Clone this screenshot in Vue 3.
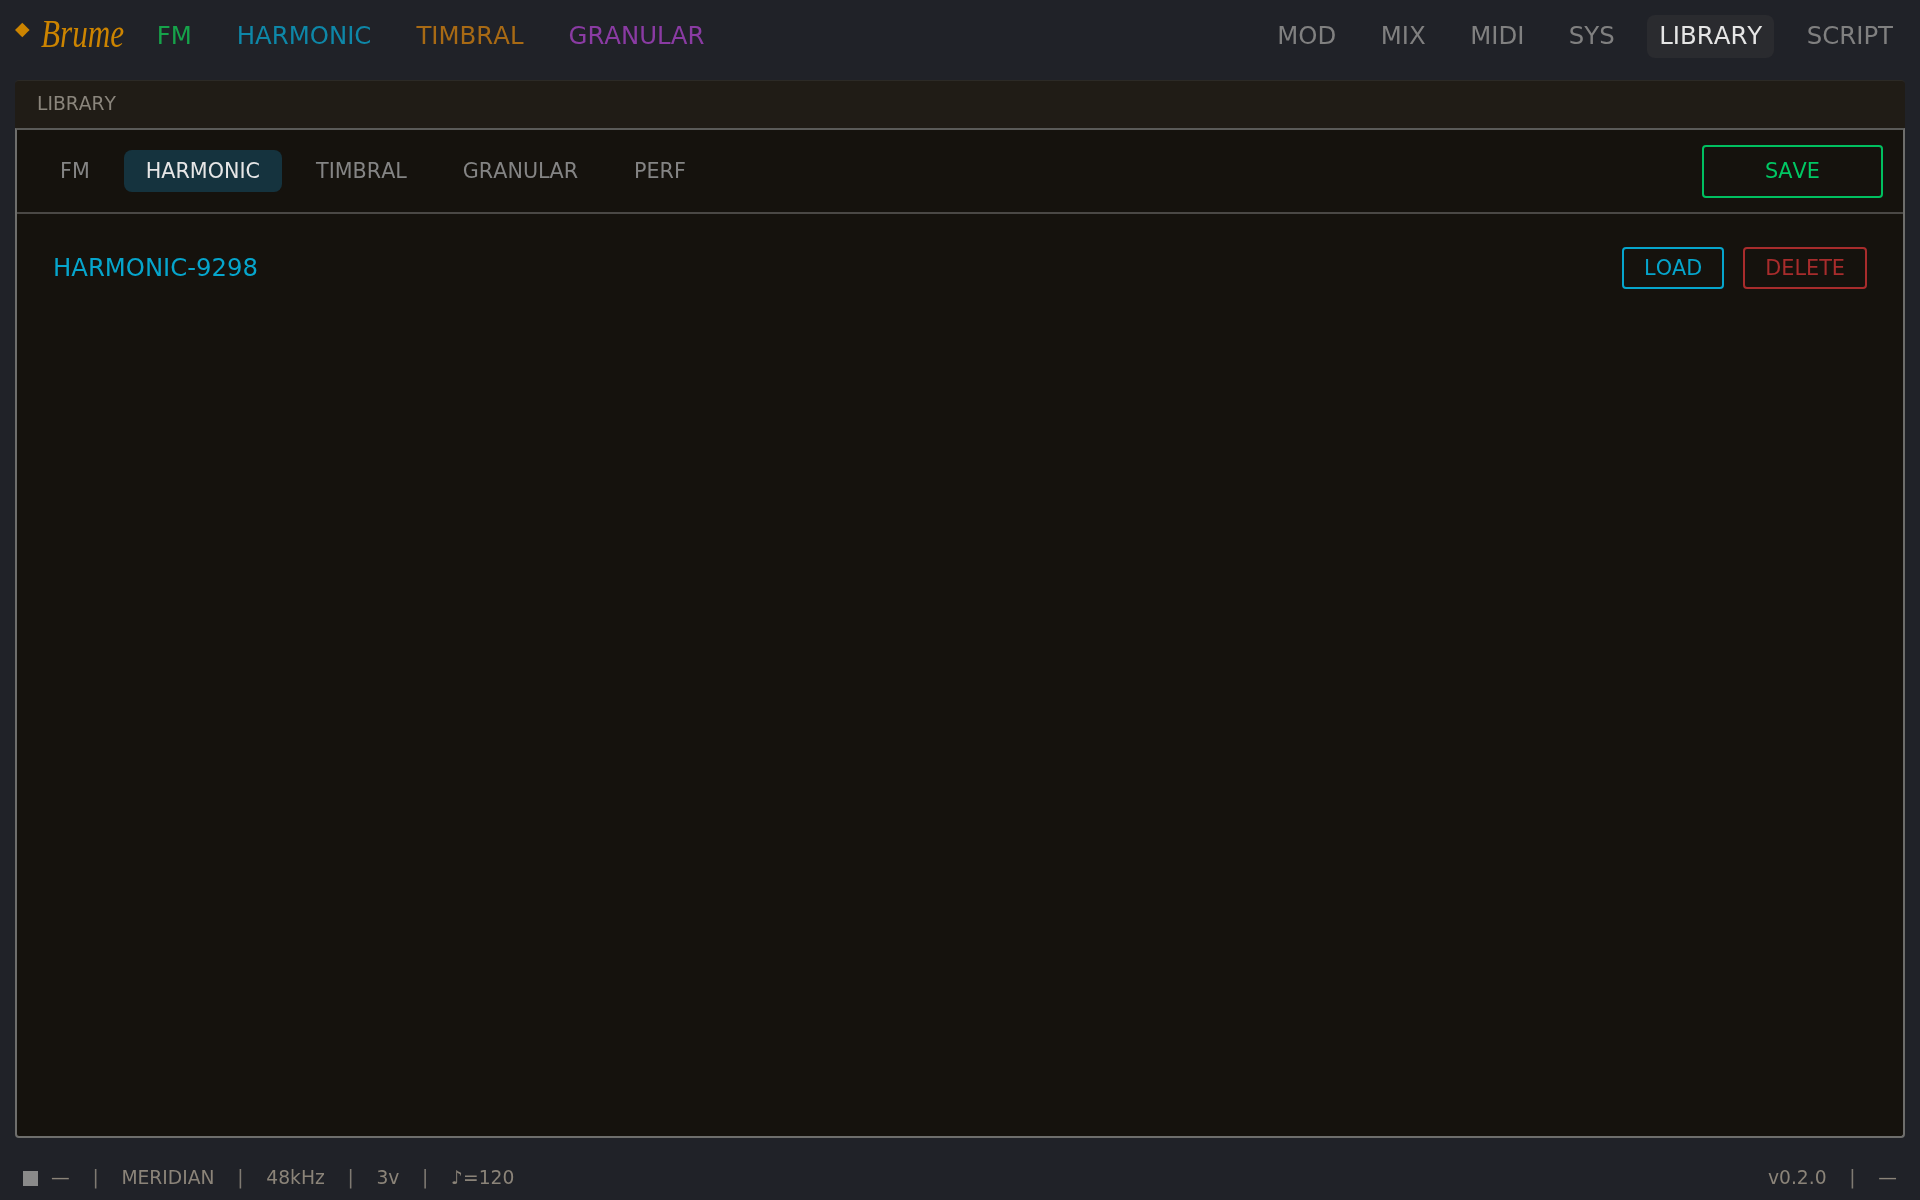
<template>
  <div class="app">
    <!-- top nav -->
    <header class="topbar">
      <div class="brand">
        <span class="diamond">◆</span>
        <span class="logo">Brume</span>
      </div>
      <nav class="engines">
        <a v-for="e in engines" :key="e.name" class="engine" :class="e.cls">{{ e.name }}</a>
      </nav>
      <nav class="pages">
        <a v-for="p in pages" :key="p" class="page" :class="{ active: p === 'LIBRARY' }">{{ p }}</a>
      </nav>
    </header>

    <!-- library panel -->
    <section class="panel">
      <div class="panel-title">LIBRARY</div>
      <div class="panel-body">
        <div class="toolbar">
          <div class="tabs">
            <button v-for="t in tabs" :key="t" type="button" class="tab" :class="{ active: t === activeTab }" @click="activeTab = t">
              {{ t }}
            </button>
          </div>
          <button type="button" class="save">SAVE</button>
        </div>
        <div class="list">
          <div class="preset">
            <span class="preset-name">HARMONIC-9298</span>
            <div class="actions">
              <button type="button" class="btn load">LOAD</button>
              <button type="button" class="btn delete">DELETE</button>
            </div>
          </div>
        </div>
      </div>
    </section>

    <!-- status bar -->
    <footer class="status">
      <div class="status-group">
        <span class="stop"></span>
        <span class="dash">—</span>
        <span class="sep">|</span>
        <span>MERIDIAN</span>
        <span class="sep">|</span>
        <span>48kHz</span>
        <span class="sep">|</span>
        <span>3v</span>
        <span class="sep">|</span>
        <span>♪=120</span>
      </div>
      <div class="status-group">
        <span>v0.2.0</span>
        <span class="sep">|</span>
        <span>—</span>
      </div>
    </footer>
  </div>
</template>

<script setup>
import { ref } from 'vue'

const engines = [
  { name: 'FM', cls: 'fm' },
  { name: 'HARMONIC', cls: 'harmonic' },
  { name: 'TIMBRAL', cls: 'timbral' },
  { name: 'GRANULAR', cls: 'granular' }
]
const pages = ['MOD', 'MIX', 'MIDI', 'SYS', 'LIBRARY', 'SCRIPT']
const tabs = ['FM', 'HARMONIC', 'TIMBRAL', 'GRANULAR', 'PERF']
const activeTab = ref('HARMONIC')
</script>

<style>
html,
body {
  margin: 0;
  background: #202228;
}
</style>

<style scoped>
.app {
  height: 1200px;
  display: flex;
  flex-direction: column;
  box-sizing: border-box;
  padding: 0 15px;
  background: #202228;
  font-family: "DejaVu Sans", sans-serif;
  font-kerning: none;
  will-change: transform;
}

/* top nav */
.topbar {
  height: 80px;
  flex: none;
  display: flex;
  align-items: flex-start;
  padding-top: 15px;
  box-sizing: border-box;
}
.brand {
  display: flex;
  align-items: flex-start;
  gap: 11px;
  height: 43px;
}
.diamond {
  font-size: 19px;
  line-height: 26px;
  color: #cc8400;
}
.logo {
  width: 84px;
  font-family: "Liberation Serif", serif;
  font-style: italic;
  font-size: 39px;
  line-height: 38px;
  color: #cc8400;
  transform: scaleX(0.8);
  transform-origin: left center;
  white-space: nowrap;
}
.engines {
  display: flex;
  margin-left: 32px;
  gap: 45px;
  line-height: 42px;
  font-size: 24.4px;
}
.engine.fm { color: #16a34a; }
.engine.harmonic { color: #0e87a8; }
.engine.timbral { color: #a86a14; }
.engine.granular { color: #8a3ba3; }
.pages {
  margin-left: auto;
  display: flex;
  gap: 20.5px;
  font-size: 24.4px;
  line-height: 42px;
}
.page {
  padding: 0 12px 1px;
  border-radius: 8px;
  color: #808080;
}
.page.active {
  background: #2a2b2f;
  color: #e6e6e6;
}

/* panel */
.panel {
  flex: none;
  height: 1058px;
  display: flex;
  flex-direction: column;
}
.panel-title {
  height: 48px;
  flex: none;
  box-sizing: border-box;
  padding-left: 22px;
  background: #201c16;
  border-top: 1px solid #2c2a26;
  border-radius: 4px 4px 0 0;
  font-size: 18.72px;
  line-height: 46px;
  color: #8a857c;
}
.panel-body {
  flex: 1;
  background: #15120d;
  border: 2px solid #6e6e6c;
  border-top-color: #5a5a58;
  border-radius: 0 0 4px 4px;
  display: flex;
  flex-direction: column;
}
.toolbar {
  height: 84px;
  box-sizing: border-box;
  flex: none;
  display: flex;
  align-items: center;
  justify-content: space-between;
  padding: 0 20px 0 21px;
  border-bottom: 2px solid #4a4845;
}
.tabs {
  display: flex;
  gap: 12px;
}
.tab {
  height: 42px;
  padding: 0 22px;
  border: none;
  border-radius: 8px;
  background: transparent;
  color: #848484;
  font-family: inherit;
  font-kerning: inherit;
  font-size: 20.7px;
}
.tab.active {
  background: #15333e;
  color: #e6e6e6;
}
.save {
  width: 181px;
  height: 53px;
  border: 2px solid #00c060;
  border-radius: 4px;
  background: transparent;
  color: #00c864;
  font-family: inherit;
  font-kerning: inherit;
  font-size: 20.8px;
}
.preset {
  display: flex;
  align-items: center;
  justify-content: space-between;
  padding: 33px 36px 0;
}
.preset-name {
  padding-bottom: 2px;
  font-size: 24.32px;
  color: #06a5cc;
}
.actions {
  display: flex;
  gap: 19px;
}
.btn {
  height: 42px;
  padding: 0 20px;
  border-radius: 4px;
  background: transparent;
  font-family: inherit;
  font-kerning: inherit;
  font-size: 20.8px;
}
.btn.load {
  border: 2px solid #06a5cc;
  color: #06a5cc;
}
.btn.delete {
  border: 2px solid #a82c2c;
  color: #a82c2c;
}

/* status bar */
.status {
  flex: 1;
  display: flex;
  align-items: center;
  justify-content: space-between;
  padding: 16px 8px 0;
  font-size: 18.72px;
  color: #8b8479;
}
.status-group {
  display: flex;
  align-items: center;
  gap: 22.7px;
}
.stop {
  width: 15px;
  height: 15px;
  margin-top: 3px;
  margin-right: -9.7px;
  background: #8a8a8a;
}
.sep {
  color: #7f7a72;
}
</style>
